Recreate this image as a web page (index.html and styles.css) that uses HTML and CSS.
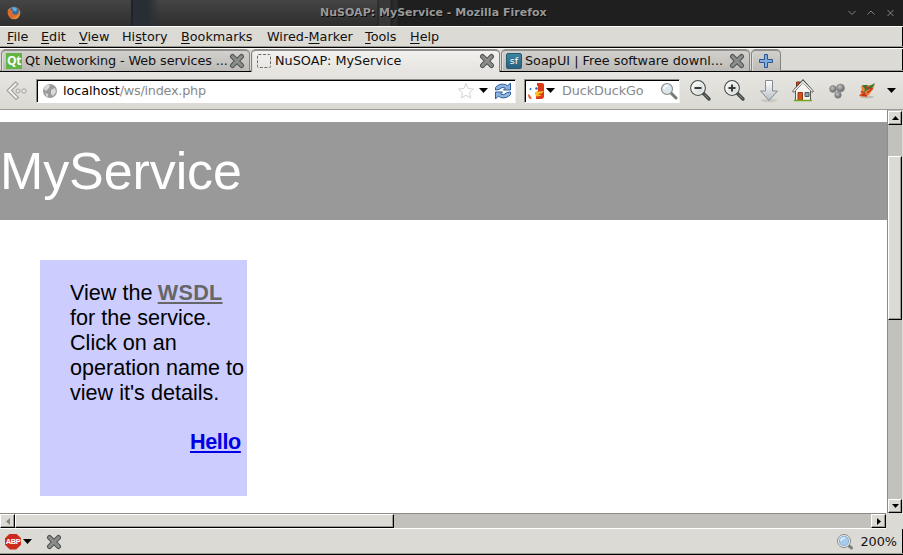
FILE: index.html
```html
<!DOCTYPE html>
<html lang="en">
<head>
<meta charset="utf-8">
<title>NuSOAP: MyService - Mozilla Firefox</title>
<link rel="stylesheet" href="styles.css">
</head>
<body>
<svg class="defs" width="0" height="0" aria-hidden="true">
  <defs>
    <linearGradient id="glass" x1="0" y1="0" x2="1" y2="1"><stop offset="0" stop-color="#fff"/><stop offset="1" stop-color="#cdd1d1"/></linearGradient>
    <linearGradient id="arrow" x1="0" y1="0" x2="0" y2="1"><stop offset="0" stop-color="#fff"/><stop offset="1" stop-color="#b5bec6"/></linearGradient>
    <linearGradient id="fox" x1="0" y1="0" x2="1" y2="1"><stop offset="0" stop-color="#e9a13c"/><stop offset=".5" stop-color="#d9602b"/><stop offset="1" stop-color="#e8b747"/></linearGradient>
    <radialGradient id="ball" cx=".4" cy=".35"><stop offset="0" stop-color="#c4c4c4"/><stop offset="1" stop-color="#777"/></radialGradient>
    <symbol id="close" viewBox="0 0 16 16">
      <path d="M3.500 3.500l9 9M12.500 3.500l-9 9" fill="none" stroke="#505351" stroke-width="5" stroke-linecap="round"/>
      <path d="M3.500 3.500l9 9M12.500 3.500l-9 9" fill="none" stroke="#8b8e8b" stroke-width="3" stroke-linecap="round"/>
    </symbol>
    <symbol id="lens" viewBox="0 0 24 24">
      <path d="M15.500 14.500l5.500 5.500" stroke="#474b49" stroke-width="3.400" stroke-linecap="round"/>
      <path d="M16.500 15.500l4 3.900" stroke="#858a87" stroke-width="1"/>
      <circle cx="10" cy="9" r="7.300" fill="url(#glass)" stroke="#4b4f4d" stroke-width="1.300"/>
      <circle cx="10" cy="9" r="6.200" fill="none" stroke="#fff" stroke-width=".8"/>
    </symbol>
  </defs>
</svg>
<div class="window">
  <header class="titlebar">
    <svg class="fox" width="14" height="14" viewBox="0 0 14 14"><circle cx="7" cy="7" r="6.300" fill="url(#fox)"/><circle cx="7.300" cy="5.300" r="4.500" fill="#326fa3"/><path d="M5 1.500q3-1 5 1l-1 3-3-1z" fill="#68acd0"/><path d="M1 3q1 1 3 1l2 2-1 1q2 3 6 1-2 4-6 3-5-2-4-8z" fill="#e06a2c"/></svg>
    <span class="caption">NuSOAP: MyService - Mozilla Firefox</span>
    <svg class="wm" width="52" height="12" viewBox="0 0 52 12"><path d="M3.500 4l3.500 3.500L10.500 4M22.500 7.500L26 4l3.500 3.500M42.500 3l6 6M48.500 3l-6 6" fill="none" stroke="#858585" stroke-width="1"/></svg>
  </header>
  <nav class="menubar">
    <span class="m1"><u>F</u>ile</span><span class="m2"><u>E</u>dit</span><span class="m3"><u>V</u>iew</span><span class="m4">Hi<u>s</u>tory</span><span class="m5"><u>B</u>ookmarks</span><span class="m6">Wired-<u>M</u>arker</span><span class="m7"><u>T</u>ools</span><span class="m8"><u>H</u>elp</span>
  </nav>
  <div class="tabs">
    <div class="tab">
      <span class="fav qt">Qt</span><span class="label tight">Qt Networking - Web services ...</span><svg class="x" width="16" height="16"><use href="#close"/></svg>
    </div>
    <div class="tab active">
      <svg class="fav" width="16" height="16" viewBox="0 0 16 16"><rect x="1.500" y="1.500" width="13" height="13" rx="1" fill="none" stroke="#6e6e6e" stroke-dasharray="3 1.500"/></svg><span class="label">NuSOAP: MyService</span><svg class="x" width="16" height="16"><use href="#close"/></svg>
    </div>
    <div class="tab">
      <span class="fav sf">sf</span><span class="label">SoapUI | Free software downl...</span><svg class="x" width="16" height="16"><use href="#close"/></svg>
    </div>
    <div class="tab plus"><svg width="16" height="16" viewBox="0 0 16 16"><path d="M6.500 1.500h3v5h5v3h-5v5h-3v-5h-5v-3h5z" fill="#83add8" stroke="#28569a"/></svg></div>
  </div>
  <div class="toolbar">
    <svg class="back" width="24" height="24" viewBox="0 0 24 24"><path d="M10.500 3L2 11.500l9 9 2.500-2-7-7L13 5z" fill="#f2f2ef" stroke="#a1a19d" stroke-width="1.100"/><circle cx="13" cy="12" r="2" fill="#e4e4e0" stroke="#a1a19d"/><circle cx="19" cy="12" r="2.200" fill="#e4e4e0" stroke="#a1a19d"/></svg>
    <div class="field url">
      <svg class="globe" width="16" height="16" viewBox="0 0 16 16"><circle cx="8" cy="8" r="7" fill="#9b9b9b"/><path d="M3 3q3-2 5-1L7 5 4 8 2 6zM9 7l4-2 1 4-3 4-2-2zM3 10l3 1v3q-2-1-3-4z" fill="#d9d9d9"/></svg>
      <span class="address">localhost<span>/ws/index.php</span></span>
      <svg class="star" width="18" height="18" viewBox="0 0 18 18"><path d="M9 1.500l2.200 5 5.300.500-4 3.700 1.200 5.300L9 13.300 4.300 16l1.200-5.300-4-3.700 5.300-.500z" fill="#fff" stroke="#d2d2d2"/></svg>
      <svg class="caret" width="9" height="5" viewBox="0 0 9 5"><path d="M0 0h9L4.500 5z"/></svg>
      <svg class="reload" width="18" height="18" viewBox="0 0 18 18"><path d="M1.500 8V5.500Q5 1 11.500 2.500l2 1.500L16.500 1v7h-7l2-2Q8 4 5 7.500zM16.500 10v2.500Q13 17 6.500 15.500l-2-1.500-3 3v-7h7l-2 2Q10 14 13 10.500z" fill="#8db4df" stroke="#2d5b9e"/></svg>
    </div>
    <div class="field search">
      <svg class="duck" width="17" height="16" viewBox="0 0 17 16"><path d="M9 0h5q2 0 2 2v11q0 3-3 3H8z" fill="#dd3917"/><path d="M0 11l2 1 3 4H2q-2-1-2-5z" fill="#e66a37"/><path d="M1 2l3-2h4l2 4v4l-3 2 1 6H4L1 10z" fill="#fff"/><circle cx="2.500" cy="6" r="1" fill="#316bb5"/><circle cx="8.500" cy="5.500" r="1.300" fill="#316bb5"/><path d="M7 9l9-1-2 2-4 1.500 4 1-5 1-2-2z" fill="#fcc21b"/></svg>
      <svg class="caret" width="9" height="5" viewBox="0 0 9 5"><path d="M0 0h9L4.500 5z"/></svg>
      <span class="hint">DuckDuckGo</span>
      <svg class="find" width="18" height="18" viewBox="0 0 18 18"><path d="M11 11l5 5" stroke="#777b78" stroke-width="3" stroke-linecap="round"/><circle cx="7" cy="7" r="5.500" fill="#dbe5ec" stroke="#8b8e8b" stroke-width="1.200"/><path d="M4 7q0-3 4-3" fill="none" stroke="#fff" stroke-width="1.500"/></svg>
    </div>
    <div class="tools">
      <svg width="24" height="24" viewBox="0 0 24 24"><use href="#lens"/><path d="M6.500 9h7" stroke="#353b39" stroke-width="2"/></svg>
      <svg width="24" height="24" viewBox="0 0 24 24"><use href="#lens"/><path d="M6.500 9h7M10 5.500v7" stroke="#353b39" stroke-width="2"/></svg>
      <svg class="down" width="24" height="24" viewBox="0 0 24 24"><ellipse cx="12" cy="21.500" rx="8" ry="1.800" fill="#c9c9c4"/><path d="M8.500 1.500h7V12h5L12 21.500 3.500 12h5z" fill="url(#arrow)" stroke="#858b8e"/></svg>
      <svg width="24" height="24" viewBox="0 0 24 24"><path d="M5.500 3h4v6h-4z" fill="#c34d20" stroke="#813016"/><path d="M4.500 11v10.500h15V11L12 3z" fill="#f4f4f1" stroke="#555855"/><path d="M2 13L12 2l10 11" fill="none" stroke="#3f4240" stroke-width="2.600"/><path d="M2.500 12.500L12 2.500l9.500 10" fill="none" stroke="#eeeeec" stroke-width="1.500"/><path d="M7 13.500h4.500v8H7z" fill="#d94f15" stroke="#963b15"/><path d="M14 13.500h4v4h-4z" fill="#8ba2b0" stroke="#555"/><path d="M3 21.500h18" stroke="#73a519" stroke-width="1.500"/></svg>
      <svg width="24" height="24" viewBox="0 0 24 24"><g stroke="#848484" stroke-width=".6" fill="url(#ball)"><circle cx="8" cy="10" r="3.400"/><circle cx="15.500" cy="9" r="4"/><circle cx="13" cy="16" r="3.300"/></g></svg>
      <svg class="leaf" width="24" height="24" viewBox="0 0 24 24"><ellipse cx="12" cy="18" rx="7" ry="1.500" fill="#bdbbb4"/><path d="M6 7l10-1 4-1-2 5-4 6-5 2-5-1 3-5z" fill="#ee7f34"/><path d="M7 6h6l-2 3 9-5-3 5-5 2-3 3 1-4z" fill="#267f3a"/><path d="M6 12l4 3-3 1 5 1M10 7l3 2 4 1-5 4" fill="none" stroke="#c62f1f" stroke-width="1.400"/></svg>
      <svg class="caret" width="9" height="5" viewBox="0 0 9 5"><path d="M0 0h9L4.500 5z"/></svg>
    </div>
  </div>
  <div class="viewport">
    <main class="page">
      <h1>MyService</h1>
      <section class="service">
        <p>View the <a class="wsdl">WSDL</a> for the service. Click on an operation name to view it's details.</p>
        <a class="hello">Hello</a>
      </section>
    </main>
    <div class="vscroll">
      <div class="btn"><svg width="7" height="4" viewBox="0 0 7 4"><path d="M0 4h7L3.500 0z"/></svg></div>
      <div class="thumb"></div>
      <div class="btn"><svg width="7" height="4" viewBox="0 0 7 4"><path d="M0 0h7L3.500 4z"/></svg></div>
    </div>
  </div>
  <div class="hrow">
    <div class="hscroll">
      <div class="btn off"><svg width="4" height="7" viewBox="0 0 4 7"><path d="M4 0v7L0 3.500z" fill="#85857f"/></svg></div>
      <div class="thumb"></div>
      <div class="btn"><svg width="4" height="7" viewBox="0 0 4 7"><path d="M0 0v7l4-3.500z"/></svg></div>
    </div>
  </div>
  <footer class="status">
    <span class="abp">ABP</span>
    <svg class="caret" width="9" height="5" viewBox="0 0 9 5"><path d="M0 0h9L4.500 5z"/></svg>
    <svg class="stop" width="16" height="16"><use href="#close"/></svg>
    <svg class="zoomicon" width="18" height="18" viewBox="0 0 18 18"><path d="M12 12l3.500 3" stroke="#7d807d" stroke-width="3" stroke-linecap="round"/><circle cx="8" cy="8" r="6.500" fill="#f4f5f3" stroke="#858986"/><circle cx="8" cy="8" r="4.800" fill="#a5cbed" stroke="#739dc4" stroke-width=".7"/><path d="M5 8q0-3 4-3" fill="none" stroke="#e4f3fe" stroke-width="1.500"/></svg>
    <span>200%</span>
  </footer>
</div>
</body>
</html>
```

FILE: styles.css
```css
* { box-sizing: border-box; }
body { margin: 0; font: 12.8px/16px "DejaVu Sans", sans-serif; color: #111; }
svg { display: block; flex: none; }
.defs { position: absolute; }
.window { width: 903px; height: 555px; display: flex; flex-direction: column; overflow: hidden; background: #dcdad5; }
.window > * { flex: none; }
.titlebar {
  height: 26px; display: flex; align-items: center; padding: 0 6px 0 7px;
  background:
    linear-gradient(90deg, transparent 0 131px, #20242a 131px 133px, #292d34 133px 147px, transparent 160px 377px, #202020 378px, #393939 379px 390px, #222 391px, #2c2c2c 394px 397px, #1f1f1f 398px),
    linear-gradient(#454545, #2d2d2d);
}
.caption { flex: 1; margin-left: 14px; padding-left: 285px; font-weight: bold; font-size: 11px; letter-spacing: .02px; color: #999; text-shadow: 1px 1px #090909; white-space: nowrap; }
.menubar { height: 22px; display: flex; align-items: center; padding-left: 7px; border-top: 1px solid #fff; border-bottom: 1px solid #000; box-shadow: inset 0 -1px #9c9a92, inset -1px 0 #000; }
.menubar span { white-space: nowrap; }
.menubar u { text-underline-offset: 2px; text-decoration-thickness: 1px; }
.m1 { width: 34px; } .m2 { width: 38px; } .m3 { width: 43px; } .m4 { width: 59px; }
.m5 { width: 86px; } .m6 { width: 98px; } .m7 { width: 45px; }
.tabs { height: 24px; display: flex; padding-left: 1px; gap: 1px; border-top: 1px solid #fff; box-shadow: inset 0 -1px #000, inset 0 -2px #9c9a92, inset -1px 0 #000; }
.tab { width: 249px; height: 22px; display: flex; align-items: center; padding: 0 4px; border: 1px solid #85837f; border-top: 2px solid #918f8b; border-bottom: 0; border-radius: 5px 5px 0 0; background: linear-gradient(#d2d1ce, #bbbab6); box-shadow: inset 1px 0 #dfded9; }
.tab.active { height: 23px; padding-bottom: 1px; background: linear-gradient(#f2f1ef, #e5e4e0); }
.tab.plus { width: 30px; padding: 0 0 0 6px; }
.fav { flex: none; width: 16px; height: 16px; }
.label { flex: 1; min-width: 0; margin-left: 3px; white-space: nowrap; }
.tight { letter-spacing: -.1px; }
.tab .x { margin-left: 1px; }
.qt { background: #62b445; color: #fff; font: bold 12px/16px "Open Sans", sans-serif; text-align: center; letter-spacing: -.5px; }
.sf { border: 1px solid #225a76; border-radius: 2px; background: linear-gradient(#3e86a2, #285f7d); color: #fff; font: 9.5px/14px "DejaVu Sans", sans-serif; text-align: center; }
.toolbar { height: 38px; display: flex; align-items: center; padding: 0 7px 0 5px; background: linear-gradient(#e6e5e1, #dad9d3); border-bottom: 1px solid #9c9a92; }
.back { margin-right: 7px; }
.field { flex: none; height: 24px; display: flex; align-items: center; background: #fff; border: 1px solid #8e8c84; border-right-color: #eee; border-bottom-color: #fff; box-shadow: inset 1px 1px #000; }
.url { width: 480px; padding: 0 3px 0 5px; }
.address { flex: 1; margin-left: 5px; color: #000; letter-spacing: -.07px; }
.address span { letter-spacing: -.25px; }
.address span, .hint { color: #888; }
.star { margin-right: 4px; }
.reload { margin-left: 6px; }
.search { width: 156px; margin-left: 8px; padding: 0 1px 0 3px; }
.search .caret { margin-left: 1px; }
.hint { flex: 1; margin-left: 7px; letter-spacing: -.1px; }
.tools { display: flex; align-items: center; flex: 1; margin-left: 8px; gap: 10px; }
.tools .down { margin-left: 1px; }
.tools .leaf { margin-left: -4px; }
.tools .caret { margin-left: -2px; }
.viewport { height: 403px; display: flex; background: #fff; }
.page { width: 887px; padding-top: 12px; font-family: "Liberation Sans", Arial, sans-serif; }
h1 { height: 98px; margin: 0 0 40px; background: #999; color: #fff; font-size: 52px; letter-spacing: -.1px; font-weight: normal; line-height: 98px; }
.service { width: 207px; height: 236px; margin-left: 40px; padding: 20px 0 0 30px; background: #ccf; color: #000; font-size: 21.6px; line-height: 25px; }
.service p { margin: 0 0 24px; }
.service a { font-weight: bold; text-decoration: underline; text-decoration-thickness: 2px; text-underline-offset: 2px; }
.wsdl { color: #666; letter-spacing: .3px; margin-left: -.7px; }
.hello { color: #0000e6; margin-left: 120px; letter-spacing: -.4px; }
.vscroll { width: 16px; display: flex; flex-direction: column; background: #c3c1bc; border-left: 1px solid #8e8c86; border-right: 1px solid #dcdad5; padding-top: 1px; }
.btn, .thumb { display: flex; flex: none; align-items: center; justify-content: center; background: #dcdad5; border: 1px solid #fff; border-right-color: #000; border-bottom-color: #000; box-shadow: inset -1px -1px #9c9a92; }
.vscroll .btn { height: 14px; }
.vscroll .thumb { height: 164px; margin: 31px 0 179px; }
.hrow { height: 16px; padding-right: 17px; background: #dcdad5; }
.hscroll { height: 16px; display: flex; background: #c3c1bc; border-top: 1px solid #8e8c86; border-bottom: 1px solid #fff; }
.hscroll .btn { width: 15px; }
.hscroll .thumb { width: 379px; margin-right: auto; }
.status { height: 26px; display: flex; align-items: center; padding: 0 6px 0 5px; border-bottom: 1px solid #000; box-shadow: inset 0 -1px #9c9a92, inset -1px 0 #000; }
.status .caret { margin-left: 2px; }
.stop { margin-left: 14px; margin-right: auto; }
.zoomicon { margin-right: 6px; }
.abp { width: 16px; height: 16px; background: #cc2a1c; color: #fff; font: bold 7.5px/16px "Liberation Sans", sans-serif; letter-spacing: -.5px; text-align: center; clip-path: polygon(30% 0, 70% 0, 100% 30%, 100% 70%, 70% 100%, 30% 100%, 0 70%, 0 30%); }
```
